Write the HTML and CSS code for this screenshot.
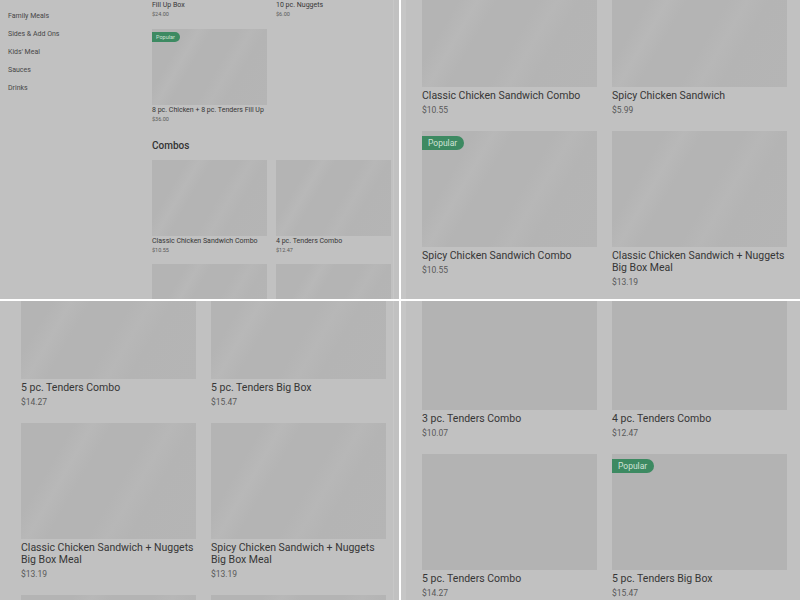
FILE: index.html
```html
<!DOCTYPE html>
<html lang="en">
<head>
  <meta charset="UTF-8">
  <title>Menu captures</title>
  <link rel="stylesheet" href="styles.css">
</head>
<body>

  <div class="mosaic">

    <!-- capture 1: full page, small -->
    <section class="tile tile-left">
      <div class="nav-view">
        <ul class="side">
          <li>Bowls &amp; Pot Pies</li>
          <li>Family Meals</li>
          <li>Sides &amp; Add Ons</li>
          <li>Kids' Meal</li>
          <li>Sauces</li>
          <li>Drinks</li>
        </ul>
        <div class="feed-small">
          <div class="grid-small">
            <div class="card">
              <div class="ph"></div>
              <p class="name">Fill Up Box</p>
              <p class="price">$24.00</p>
            </div>
            <div class="card">
              <div class="ph"></div>
              <p class="name">10 pc. Nuggets</p>
              <p class="price">$6.00</p>
            </div>
            <div class="card">
              <div class="ph"><span class="badge">Popular</span></div>
              <p class="name">8 pc. Chicken + 8 pc. Tenders Fill Up</p>
              <p class="price">$36.00</p>
            </div>
          </div>
          <h2 class="section-title">Combos</h2>
          <div class="grid-small">
            <div class="card">
              <div class="ph"></div>
              <p class="name">Classic Chicken Sandwich Combo</p>
              <p class="price">$10.55</p>
            </div>
            <div class="card">
              <div class="ph"></div>
              <p class="name">4 pc. Tenders Combo</p>
              <p class="price">$12.47</p>
            </div>
            <div class="card">
              <div class="ph"></div>
              <p class="name">3 pc. Tenders Combo</p>
              <p class="price">$10.07</p>
            </div>
            <div class="card">
              <div class="ph"></div>
              <p class="name">4 pc. Tenders Combo</p>
              <p class="price">$12.47</p>
            </div>
          </div>
        </div>
      </div>
    </section>

    <!-- capture 2 -->
    <section class="tile tile-right">
      <div class="feed feed-a">
        <div class="card">
          <div class="ph"></div>
          <p class="name">Classic Chicken Sandwich Combo</p>
          <p class="price">$10.55</p>
        </div>
        <div class="card">
          <div class="ph"></div>
          <p class="name">Spicy Chicken Sandwich</p>
          <p class="price">$5.99</p>
        </div>
        <div class="card">
          <div class="ph"><span class="badge">Popular</span></div>
          <p class="name">Spicy Chicken Sandwich Combo</p>
          <p class="price">$10.55</p>
        </div>
        <div class="card">
          <div class="ph"></div>
          <p class="name">Classic Chicken Sandwich + Nuggets Big Box Meal</p>
          <p class="price">$13.19</p>
        </div>
      </div>
    </section>

    <!-- capture 3 -->
    <section class="tile tile-left">
      <div class="feed feed-b">
        <div class="card">
          <div class="ph"></div>
          <p class="name">5 pc. Tenders Combo</p>
          <p class="price">$14.27</p>
        </div>
        <div class="card">
          <div class="ph"></div>
          <p class="name">5 pc. Tenders Big Box</p>
          <p class="price">$15.47</p>
        </div>
        <div class="card">
          <div class="ph"></div>
          <p class="name">Classic Chicken Sandwich + Nuggets Big Box Meal</p>
          <p class="price">$13.19</p>
        </div>
        <div class="card">
          <div class="ph"></div>
          <p class="name">Spicy Chicken Sandwich + Nuggets Big Box Meal</p>
          <p class="price">$13.19</p>
        </div>
        <div class="card">
          <div class="ph"></div>
        </div>
        <div class="card">
          <div class="ph"><span class="badge">Popular</span></div>
        </div>
      </div>
    </section>

    <!-- capture 4: images not loaded yet -->
    <section class="tile tile-right">
      <div class="feed feed-c">
        <div class="card">
          <div class="ph flat"></div>
          <p class="name">3 pc. Tenders Combo</p>
          <p class="price">$10.07</p>
        </div>
        <div class="card">
          <div class="ph flat"></div>
          <p class="name">4 pc. Tenders Combo</p>
          <p class="price">$12.47</p>
        </div>
        <div class="card">
          <div class="ph flat"></div>
          <p class="name">5 pc. Tenders Combo</p>
          <p class="price">$14.27</p>
        </div>
        <div class="card">
          <div class="ph flat"><span class="badge">Popular</span></div>
          <p class="name">5 pc. Tenders Big Box</p>
          <p class="price">$15.47</p>
        </div>
      </div>
    </section>

  </div>

</body>
</html>
```

FILE: styles.css
```css
* {

  box-sizing: border-box;
  margin: 0;
  padding: 0;

}

body {

  background-color: #ffffff;
  font-family: Roboto, 'Liberation Sans', sans-serif;
  color: #3e3e3e;

}

.mosaic {

  display: grid;
  grid-template-columns: 399px 399px;
  grid-template-rows: 299px 299px;
  gap: 2px;
  width: 800px;
  height: 600px;

}

.tile {

  background-color: #c1c1c1;
  overflow: hidden;

}

.tile-left {

  box-shadow: inset -5px 0 0 #c1c1c1, inset -6px 0 0 #c7c7c7;

}

.tile-right {

  box-shadow: inset 5px 0 0 #c6c6c6;

}

/* placeholders */

.ph {

  position: relative;
  background: linear-gradient(120deg, #b4b4b4 0%, #b4b4b4 22%, #b8b8b8 30%, #b4b4b4 38%, #b4b4b4 55%, #b7b7b7 63%, #b4b4b4 72%, #b5b5b5 100%);

}

.ph.flat {

  background: #b3b3b3;

}

.badge {

  position: absolute;
  top: 5px;
  left: 0;
  height: 14px;
  padding: 0 7px 0 6px;
  border-radius: 0 8px 8px 0;
  background-color: #3d8a62;
  color: #cfe2d6;
  font-size: 8.5px;
  line-height: 14px;

}

.name {

  color: #363636;

}

.price {

  color: #595959;

}

/* capture 1 */

.nav-view {

  display: flex;

}

.side {

  width: 152px;
  padding-left: 8px;
  margin-top: -11px;
  list-style-type: none;
  font-size: 7px;
  line-height: 18px;
  color: #474747;

}

.feed-small {

  width: 239px;
  margin-top: -76px;

}

.grid-small {

  display: grid;
  grid-template-columns: 115px 115px;
  column-gap: 9px;
  row-gap: 9.5px;

}

.grid-small .ph {

  height: 76px;

}

.grid-small .name {

  font-size: 7px;
  line-height: 9px;
  margin-top: 1px;

}

.grid-small .price {

  font-size: 5.5px;
  line-height: 9px;

}

.grid-small .badge {

  top: 3px;
  height: 10px;
  padding: 0 5px 0 4px;
  border-radius: 0 5px 5px 0;
  font-size: 5.5px;
  line-height: 10px;

}

.section-title {

  font-size: 10px;
  font-weight: 500;
  line-height: 12px;
  margin: 16px 0 8px;
  color: #333333;

}

/* captures 2 to 4 */

.feed {

  display: grid;
  grid-template-columns: 175px 175px;
  column-gap: 15px;
  row-gap: 15px;
  padding-left: 21px;

}

.feed .ph {

  height: 116px;

}

.feed .name {

  font-size: 10.5px;
  line-height: 12px;
  margin-top: 3px;

}

.feed .price {

  font-size: 8.5px;
  line-height: 12px;
  margin-top: 2px;

}

.feed-a {

  margin-top: -29px;

}

.feed-b {

  margin-top: -38px;

}

.feed-c {

  margin-top: -7px;

}
```
